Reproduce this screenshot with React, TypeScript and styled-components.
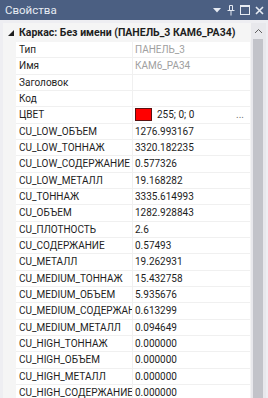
import React from 'react';
import styled, {createGlobalStyle} from 'styled-components';

const GlobalStyle = createGlobalStyle`
  html, body {
    margin: 0;
    padding: 0;
    background: #eeeef2;
  }
  * {
    box-sizing: border-box;
  }
`;

type Prop = {
  name: string;
  value: string;
  readOnly?: boolean;
  color?: string;
};

const props: Prop[] = [
  {name: 'Тип', value: 'ПАНЕЛЬ_3', readOnly: true},
  {name: 'Имя', value: 'КАМ6_РА34', readOnly: true},
  {name: 'Заголовок', value: ''},
  {name: 'Код', value: ''},
  {name: 'ЦВЕТ', value: '255; 0; 0', color: '#ff0000'},
  {name: 'CU_LOW_ОБЪЕМ', value: '1276.993167'},
  {name: 'CU_LOW_ТОННАЖ', value: '3320.182235'},
  {name: 'CU_LOW_СОДЕРЖАНИЕ', value: '0.577326'},
  {name: 'CU_LOW_МЕТАЛЛ', value: '19.168282'},
  {name: 'CU_ТОННАЖ', value: '3335.614993'},
  {name: 'CU_ОБЪЕМ', value: '1282.928843'},
  {name: 'CU_ПЛОТНОСТЬ', value: '2.6'},
  {name: 'CU_СОДЕРЖАНИЕ', value: '0.57493'},
  {name: 'CU_МЕТАЛЛ', value: '19.262931'},
  {name: 'CU_MEDIUM_ТОННАЖ', value: '15.432758'},
  {name: 'CU_MEDIUM_ОБЪЕМ', value: '5.935676'},
  {name: 'CU_MEDIUM_СОДЕРЖАНИЕ', value: '0.613299'},
  {name: 'CU_MEDIUM_МЕТАЛЛ', value: '0.094649'},
  {name: 'CU_HIGH_ТОННАЖ', value: '0.000000'},
  {name: 'CU_HIGH_ОБЪЕМ', value: '0.000000'},
  {name: 'CU_HIGH_МЕТАЛЛ', value: '0.000000'},
  {name: 'CU_HIGH_СОДЕРЖАНИЕ', value: '0.000000'}
];

const Window = styled.div`
  width: 268px;
  height: 398px;
  display: flex;
  flex-direction: column;
  overflow: hidden;
  font-family: Roboto, 'Liberation Sans', sans-serif;
  font-size: 10px;
  color: #1e1e1e;
`;

const TitleBar = styled.div`
  height: 20px;
  flex: none;
  display: flex;
  align-items: center;
  padding: 0 4px 0 5px;
  background: #4b5f82;
  color: #e6ebf3;
  font-size: 11.5px;
`;

const Title = styled.span`
  flex: 1;
`;

const TitleButtons = styled.div`
  display: flex;
  align-items: center;
  gap: 4px;
`;

const TitleButton = styled.span`
  width: 10px;
  height: 12px;
  display: flex;
  align-items: center;
  justify-content: center;
`;

const Body = styled.div`
  flex: 1;
  display: flex;
  margin: 3px 2px 0 3px;
  background: #ffffff;
  min-height: 0;
`;

const Grid = styled.div`
  flex: 1;
  min-width: 0;
  display: flex;
  flex-direction: column;
`;

const CategoryRow = styled.div`
  height: 19px;
  flex: none;
  display: flex;
  align-items: center;
  background: #f5f5f5;
  font-weight: 700;
  font-size: 10.5px;
  white-space: nowrap;
`;

const Expander = styled.span`
  width: 16px;
  flex: none;
  display: flex;
  justify-content: center;
`;

const Row = styled.div`
  height: 16.33px;
  flex: none;
  display: grid;
  grid-template-columns: 13px 117px 1fr;
  background: #f5f5f5;
`;

const Cell = styled.div<{$muted?: boolean}>`
  display: flex;
  align-items: center;
  gap: 5px;
  min-width: 0;
  overflow: hidden;
  white-space: nowrap;
  background: #ffffff;
  border-bottom: 1px solid #f0f0f0;
  color: ${p => (p.$muted ? '#a0a0a0' : '#1e1e1e')};
`;

const NameCell = styled(Cell)`
  padding-left: 3px;
  border-right: 1px solid #f0f0f0;
`;

const ValueCell = styled(Cell)`
  padding-left: 2px;
`;

const Swatch = styled.span<{$color: string}>`
  width: 17px;
  height: 13px;
  flex: none;
  background: ${p => p.$color};
  border: 1px solid #5a1010;
`;

const Ellipsis = styled.span`
  margin-left: auto;
  margin-right: 6px;
  color: #707070;
`;

const Scrollbar = styled.div`
  width: 16px;
  flex: none;
  display: flex;
  flex-direction: column;
  background: #e8e8ec;
  border-left: 1px solid #f4f4f4;
`;

const ScrollArrow = styled.div`
  height: 16px;
  display: flex;
  align-items: center;
  justify-content: center;
`;

const Thumb = styled.div`
  flex: 1;
  margin: 0 3px 0 2px;
  background: #c2c3c9;
`;

export default function App() {
  return (
    <>
      <GlobalStyle />
      <Window>
        <TitleBar>
          <Title>Свойства</Title>
          <TitleButtons>
            <TitleButton>
              <svg width="8" height="5" viewBox="0 0 8 5">
                <path d="M0 0h8L4 4.5z" fill="#e6ebf3" />
              </svg>
            </TitleButton>
            <TitleButton>
              <svg width="8" height="11" viewBox="0 0 8 11">
                <path d="M2.5 0.5h3v5h-3zM0.5 5.5h7M4 5.5v5" stroke="#e6ebf3" fill="none" />
              </svg>
            </TitleButton>
            <TitleButton>
              <svg width="10" height="10" viewBox="0 0 10 10">
                <rect x="0.5" y="0.5" width="9" height="9" stroke="#e6ebf3" fill="none" />
                <path d="M0.5 1.5h9" stroke="#e6ebf3" />
              </svg>
            </TitleButton>
            <TitleButton>
              <svg width="9" height="9" viewBox="0 0 9 9">
                <path d="M1 1l7 7M8 1l-7 7" stroke="#e6ebf3" strokeWidth="1.6" />
              </svg>
            </TitleButton>
          </TitleButtons>
        </TitleBar>
        <Body>
          <Grid>
            <CategoryRow>
              <Expander>
                <svg width="6" height="6" viewBox="0 0 6 6">
                  <path d="M6 0v6H0z" fill="#1e1e1e" />
                </svg>
              </Expander>
              Каркас: Без имени (ПАНЕЛЬ_3 КАМ6_РА34)
            </CategoryRow>
            {props.map(p => (
              <Row key={p.name}>
                <span />
                <NameCell>{p.name}</NameCell>
                <ValueCell $muted={p.readOnly}>
                  {p.color && <Swatch $color={p.color} />}
                  {p.value}
                  {p.color && <Ellipsis>...</Ellipsis>}
                </ValueCell>
              </Row>
            ))}
          </Grid>
          <Scrollbar>
            <ScrollArrow>
              <svg width="7" height="4" viewBox="0 0 7 4">
                <path d="M0 4L3.5 0.5 7 4" stroke="#606060" fill="none" />
              </svg>
            </ScrollArrow>
            <Thumb />
          </Scrollbar>
        </Body>
      </Window>
    </>
  );
}
